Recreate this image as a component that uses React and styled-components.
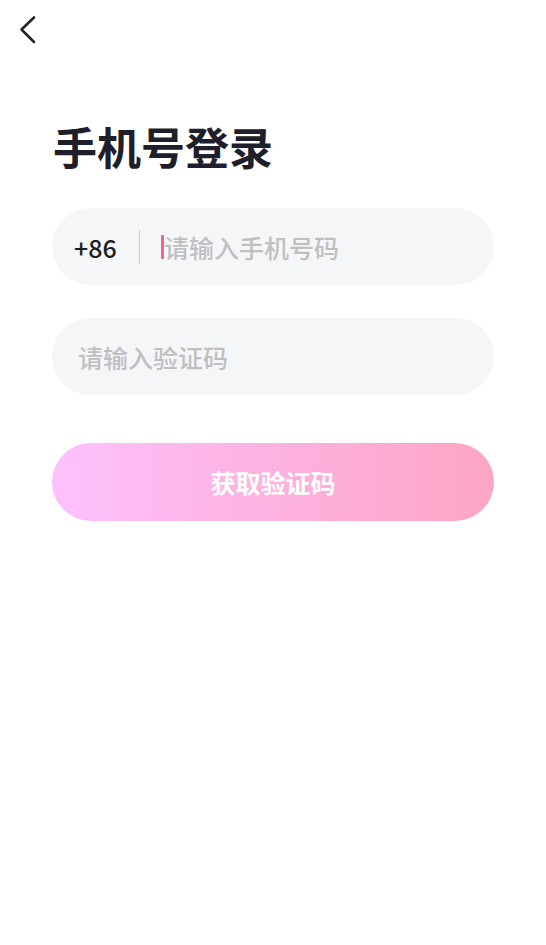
import React, { useState } from "react";
import styled, { createGlobalStyle } from "styled-components";

const GlobalStyle = createGlobalStyle`
  * { box-sizing: border-box; }
  body {
    margin: 0;
    background: #ffffff;
    font-family: "Noto Sans CJK SC", "Noto Sans", sans-serif;
  }
`;

export default function App() {
  const [phone, setPhone] = useState("");
  const [code, setCode] = useState("");

  return (
    <Page>
      <GlobalStyle />
      <Header>
        <BackButton aria-label="返回">
          <svg width="18" height="30" viewBox="0 0 18 30" fill="none">
            <path
              d="M15 2.5L2.5 14.5L15 27"
              stroke="#22222c"
              strokeWidth="2.6"
              strokeLinecap="round"
              strokeLinejoin="round"
            />
          </svg>
        </BackButton>
      </Header>
      <Content>
        <Title>手机号登录</Title>
        <Field>
          <Prefix>+86</Prefix>
          <Divider />
          <Caret />
          <Input
            value={phone}
            onChange={(e) => setPhone(e.target.value)}
            placeholder="请输入手机号码"
          />
        </Field>
        <Field $gap={33} $pad={26}>
          <Input
            value={code}
            onChange={(e) => setCode(e.target.value)}
            placeholder="请输入验证码"
          />
        </Field>
        <SubmitButton>获取验证码</SubmitButton>
      </Content>
    </Page>
  );
}

const Page = styled.div`
  min-height: 100vh;
  background: #ffffff;
`;

const Header = styled.div`
  height: 60px;
  display: flex;
  align-items: center;
  padding-left: 19px;
`;

const BackButton = styled.button`
  border: none;
  background: none;
  padding: 0;
  display: flex;
  align-items: center;
  cursor: pointer;
`;

const Content = styled.div`
  padding: 0 52px;
  display: flex;
  flex-direction: column;
`;

const Title = styled.h1`
  margin: 58px 0 0 1px;
  font-size: 44px;
  line-height: 56px;
  font-weight: 700;
  color: #1f1f2b;
  letter-spacing: 0;
`;

const Field = styled.div`
  margin-top: ${(p) => (p.$gap ? p.$gap : 34)}px;
  height: 77px;
  border-radius: 39px;
  background: #f5f6f8;
  display: flex;
  align-items: center;
  padding-left: ${(p) => (p.$pad ? p.$pad : 22)}px;
  padding-right: 26px;
`;

const Prefix = styled.span`
  font-family: "Noto Sans CJK SC", "Noto Sans", sans-serif;
  font-size: 25px;
  font-weight: 500;
  color: #1d1d26;
  width: 44px;
`;

const Divider = styled.span`
  width: 1px;
  height: 34px;
  background: #cfcfd3;
  margin-left: 21px;
  margin-right: 21px;
`;

const Caret = styled.span`
  width: 3px;
  height: 24px;
  border-radius: 1px;
  background: #f0629c;
`;

const Input = styled.input`
  flex: 1;
  min-width: 0;
  border: none;
  outline: none;
  background: transparent;
  padding: 0;
  font-family: "Noto Sans CJK SC", sans-serif;
  font-size: 25px;
  font-weight: 500;
  color: #1d1d26;
  caret-color: #f0629c;
  &::placeholder {
    color: #bfbfc1;
  }
`;

const SubmitButton = styled.button`
  margin-top: 48px;
  height: 78px;
  border: none;
  border-radius: 39px;
  background: linear-gradient(90deg, #fec1fd 0%, #fdb3e3 45%, #fda5c4 100%);
  color: #ffffff;
  font-family: "Noto Sans CJK SC", sans-serif;
  font-size: 25px;
  font-weight: 700;
  cursor: pointer;
`;
